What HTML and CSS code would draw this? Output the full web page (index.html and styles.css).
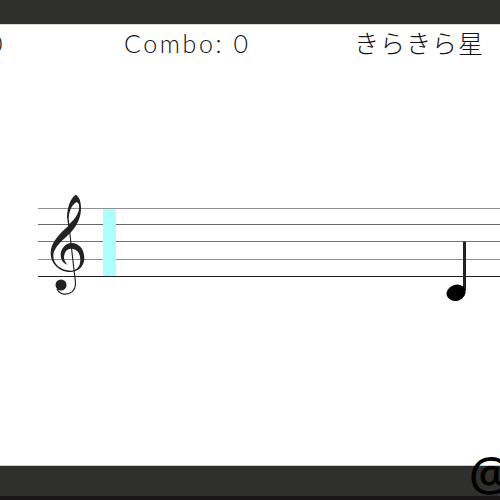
FILE: index.html
```
<!DOCTYPE html>
<html lang="ja">
<head>
<meta charset="utf-8">
<title>きらきら星</title>
<link rel="stylesheet" href="styles.css">
</head>
<body>
<div class="top-bar"></div>
<main class="game">
  <header class="hud">
    <div class="score">0</div>
    <div class="combo">Combo: 0</div>
    <div class="song">きらきら星</div>
  </header>
  <section class="staff">
    <div class="line soft"></div>
    <div class="line"></div>
    <div class="line mid"></div>
    <div class="line soft"></div>
    <div class="line dark"></div>
    <div class="cursor"></div>
    <svg class="clef" viewBox="0 0 300 360">
      <path fill="#222" fill-rule="evenodd" d="M137 29C121 40 112 66 111 96L115 123C90 145 62 172 62 204C62 239 91 262 124 261C148 260 164 241 163 217C162 190 145 174 125 174C105 174 92 193 92 211C93 229 103 237 113 239C102 228 100 217 104 206C108 195 115 191 126 191C143 193 151 206 151 225C151 245 140 256 123 257C92 257 69 238 70 211C71 187 99 165 120 145C143 122 154 94 153 67C152 47 148 35 137 29ZM140 51C150 54 150 74 141 89C135 100 126 110 117 118C114 91 119 64 140 51Z"/>
      <path fill="none" stroke="#222" stroke-width="3.5" d="M115 105L133 264C137 292 140 307 127 320C112 332 89 330 81 312"/>
      <circle cx="93" cy="300" r="16.5" fill="#222"/>
    </svg>
    <svg class="note" viewBox="0 0 70 80">
      <rect x="33" y="11.5" width="3" height="49" fill="#222"/>
      <ellipse cx="26.1" cy="62.8" rx="9.7" ry="8" transform="rotate(-18 26.1 62.8)"/>
    </svg>
  </section>
</main>
<footer class="bottom-bar"><span class="handle">@</span></footer>
</body>
</html>
```
FILE: styles.css
```
body {
  margin: 0;
  width: 500px;
  height: 500px;
  overflow: hidden;
  display: grid;
  grid-template-rows: 24px 442px 34px;
  background: #fff;
  color: #111;
}
.top-bar { background: #2f2f2d; }
.game {
  display: grid;
  grid-template-rows: 184px 69px;
  border-top: 1px solid #ddd9d5;
  border-bottom: 1px solid #c8cdcd;
  box-sizing: border-box;
}
.hud {
  display: grid;
  grid-template-columns: 124px 230px 146px;
  height: 40px;
  line-height: 36px;
  font-family: Lato, "Noto Sans CJK JP", sans-serif;
  font-size: 25px;
  font-weight: 300;
  white-space: nowrap;
}
.score { margin-left: -12px; }
.combo { letter-spacing: 2.6px; }
.song {
  font-family: "Noto Sans CJK JP", sans-serif;
  font-size: 25px;
  line-height: 34px;
  letter-spacing: 1px;
}
.staff {
  position: relative;
  margin: -1px 0 0 38px;
  display: grid;
  grid-template-rows: 16px 17px 18px 17px 1px;
}
.line { border-top: 1px solid #686868; }
.line.soft { border-color: #909090; }
.line.mid { border-color: #777; }
.line.dark { border-color: #202020; }
.cursor {
  position: absolute;
  left: 64.6px;
  top: 1px;
  width: 13.4px;
  height: 67px;
  background: #aaffff;
}
.clef {
  position: absolute;
  left: -8px;
  top: -23px;
  width: 100px;
  height: 120px;
}
.note {
  position: absolute;
  left: 392px;
  top: 22px;
  width: 70px;
  height: 80px;
}
.bottom-bar {
  position: relative;
  background: #2f2f2d;
  border-bottom: 4px solid #181617;
  box-sizing: border-box;
}
.handle {
  position: absolute;
  left: 469px;
  top: -18px;
  font: 600 47px/50px "Open Sans", sans-serif;
  color: #000;
}
```
